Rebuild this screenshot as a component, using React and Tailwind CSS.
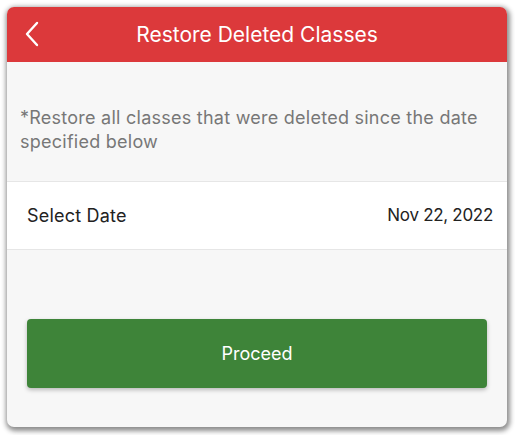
export default function App() {
  return (
    <div className="w-[515px] h-[435px] bg-white p-[7px] pr-[8px] pb-[8px]" style={{ fontFamily: 'Inter, "Liberation Sans", sans-serif' }}>
      <div className="w-[500px] h-[420px] rounded-[7px] bg-[#f7f7f7] overflow-hidden flex flex-col shadow-[1px_2px_5px_2px_rgba(0,0,0,0.45)]">
        <div className="h-[55px] bg-[#dc393b] flex items-center relative shrink-0">
          <svg className="absolute left-[17px] top-[14px]" width="16" height="26" viewBox="0 0 16 26" fill="none">
            <path d="M13 2 L3 13 L13 24" stroke="#fff" strokeWidth="2.4" strokeLinecap="round" strokeLinejoin="round" />
          </svg>
          <div className="w-full text-center text-white text-[21px] leading-none">Restore Deleted Classes</div>
        </div>
        <div className="px-[13px] pt-[44px] pb-[27px] text-[#777] text-[18px] leading-[24px] tracking-[0.25px]">
          *Restore all classes that were deleted since the date specified below
        </div>
        <div className="h-[69px] bg-white border-t border-b border-[#e6e6e6] flex items-center justify-between pl-[20px] pr-[14px] text-[#222]">
          <span className="text-[18px] tracking-[0.2px]">Select Date</span>
          <span className="text-[17px] tracking-[-0.3px]">Nov 22, 2022</span>
        </div>
        <div className="px-[20px] pt-[69px]">
          <div className="h-[69px] rounded-[4px] bg-[#3e8439] flex items-center justify-center text-white text-[18px] shadow-[0_2px_4px_rgba(0,0,0,0.25)]">
            Proceed
          </div>
        </div>
      </div>
    </div>
  );
}
